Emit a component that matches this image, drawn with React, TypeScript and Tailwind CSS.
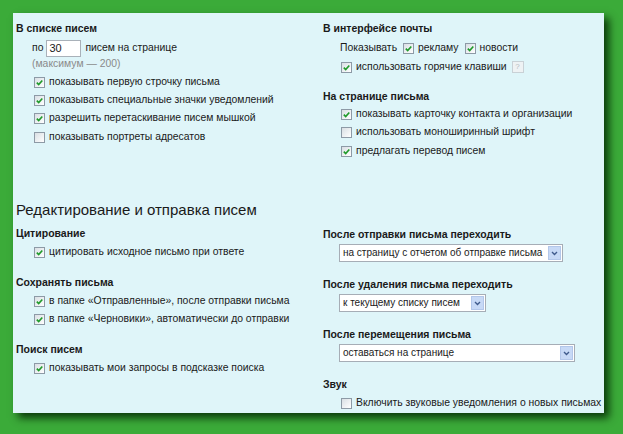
import React from "react";

const FONT = { fontFamily: '"Liberation Sans", Arial, sans-serif' };

function Box({ on }: { on?: boolean }) {
  return (
    <span className="relative inline-block w-[11px] h-[11px] shrink-0 border border-[#8d9aa6] bg-gradient-to-br from-[#d9dfe4] to-[#ffffff]">
      {on && (
        <svg viewBox="0 0 9 9" className="absolute left-0 top-0 w-[9px] h-[9px]">
          <path d="M1.8 4.6 L3.7 6.6 L7.3 2.4" fill="none" stroke="#1f9a2a" strokeWidth="1.6" />
        </svg>
      )}
    </span>
  );
}

function Row({ on, children, mt = "" }: { on?: boolean; children: React.ReactNode; mt?: string }) {
  return (
    <div className={`flex items-center gap-[4px] h-[18px] pl-[18px] whitespace-nowrap ${mt}`}>
      <Box on={on} />
      <span>{children}</span>
    </div>
  );
}

function Title({ children, mt = "" }: { children: React.ReactNode; mt?: string }) {
  return <div className={`h-[14px] leading-[14px] text-[10.5px] font-bold whitespace-nowrap ${mt}`}>{children}</div>;
}

function Picker({ text, width }: { text: string; width: string }) {
  return (
    <div className={`ml-[16px] mt-[3px] h-[18px] flex items-center justify-between bg-white border border-[#a6adb6] pl-[3px] pr-[1px] whitespace-nowrap text-[10px] ${width}`}>
      <span>{text}</span>
      <span className="w-[13px] h-[14px] flex items-center justify-center bg-[#c7d9f6] border border-[#b3c7ea]">
        <svg viewBox="0 0 8 6" className="w-[7px] h-[5px]">
          <path d="M1 1.2 L4 4.3 L7 1.2" fill="none" stroke="#3f5a8c" strokeWidth="1.6" />
        </svg>
      </span>
    </div>
  );
}

export default function App() {
  return (
    <div className="w-[623px] h-[434px] bg-[#3bab39] pt-[13px] pl-[13px] overflow-hidden" style={FONT}>
      <div className="w-[591px] h-[400px] bg-[#dff5f9] text-[#1a1a1a] text-[10.4px] leading-[14px] overflow-hidden shadow-[5px_5px_8px_rgba(0,30,0,0.8)] pl-[3px]">
        <div className="flex h-[187px]">
          <div className="w-[307px] pt-[8px]">
            <Title>В списке писем</Title>
            <div className="mt-[4px] h-[18px] flex items-center pl-[16px] whitespace-nowrap">
              <span>по</span>
              <span className="ml-[3px] w-[35px] h-[17px] bg-white border border-[#a9b1b9] flex items-center pl-[2px] text-[11px]">30</span>
              <span className="ml-[4px]">писем на странице</span>
            </div>
            <div className="h-[14px] pl-[16px] text-[#8a8a8a]">(максимум — 200)</div>
            <Row on mt="mt-[2px]">показывать первую строчку письма</Row>
            <Row on>показывать специальные значки уведомлений</Row>
            <Row on>разрешить перетаскивание писем мышкой</Row>
            <Row mt="mt-[1px]">показывать портреты адресатов</Row>
          </div>
          <div className="flex-1 pt-[8px]">
            <Title>В интерфейсе почты</Title>
            <div className="mt-[4px] h-[18px] flex items-center pl-[17px] whitespace-nowrap">
              <span>Показывать</span>
              <span className="ml-[6px] flex items-center gap-[4px]">
                <Box on />
                <span>рекламу</span>
              </span>
              <span className="ml-[6px] flex items-center gap-[4px]">
                <Box on />
                <span>новости</span>
              </span>
            </div>
            <div className="mt-[1px] flex items-center gap-[4px] h-[18px] pl-[18px] whitespace-nowrap">
              <Box on />
              <span>использовать горячие клавиши</span>
              <span className="ml-[1px] w-[12px] h-[12px] border border-[#c9d1d6] bg-[#eef2f4] text-[8px] leading-[10px] text-center text-[#b5bcc2]">?</span>
            </div>
            <Title mt="mt-[13px]">На странице письма</Title>
            <Row on mt="mt-[2px]">показывать карточку контакта и организации</Row>
            <Row>использовать моноширинный шрифт</Row>
            <Row on mt="mt-[1px]">предлагать перевод писем</Row>
          </div>
        </div>
        <div className="h-[20px] leading-[20px] text-[15px] whitespace-nowrap">Редактирование и отправка писем</div>
        <div className="flex">
          <div className="w-[307px]">
            <Title mt="mt-[6px]">Цитирование</Title>
            <Row on mt="mt-[3px]">цитировать исходное письмо при ответе</Row>
            <Title mt="mt-[14px]">Сохранять письма</Title>
            <Row on mt="mt-[3px]">в папке «Отправленные», после отправки письма</Row>
            <Row on>в папке «Черновики», автоматически до отправки</Row>
            <Title mt="mt-[14px]">Поиск писем</Title>
            <Row on mt="mt-[3px]">показывать мои запросы в подсказке поиска</Row>
          </div>
          <div className="flex-1">
            <Title mt="mt-[7px]">После отправки письма переходить</Title>
            <Picker text="на страницу с отчетом об отправке письма" width="w-[224px]" />
            <Title mt="mt-[15px]">После удаления письма переходить</Title>
            <Picker text="к текущему списку писем" width="w-[147px]" />
            <Title mt="mt-[15px]">После перемещения письма</Title>
            <Picker text="оставаться на странице" width="w-[236px]" />
            <Title mt="mt-[15px]">Звук</Title>
            <Row mt="mt-[3px]">Включить звуковые уведомления о новых письмах</Row>
          </div>
        </div>
      </div>
    </div>
  );
}
